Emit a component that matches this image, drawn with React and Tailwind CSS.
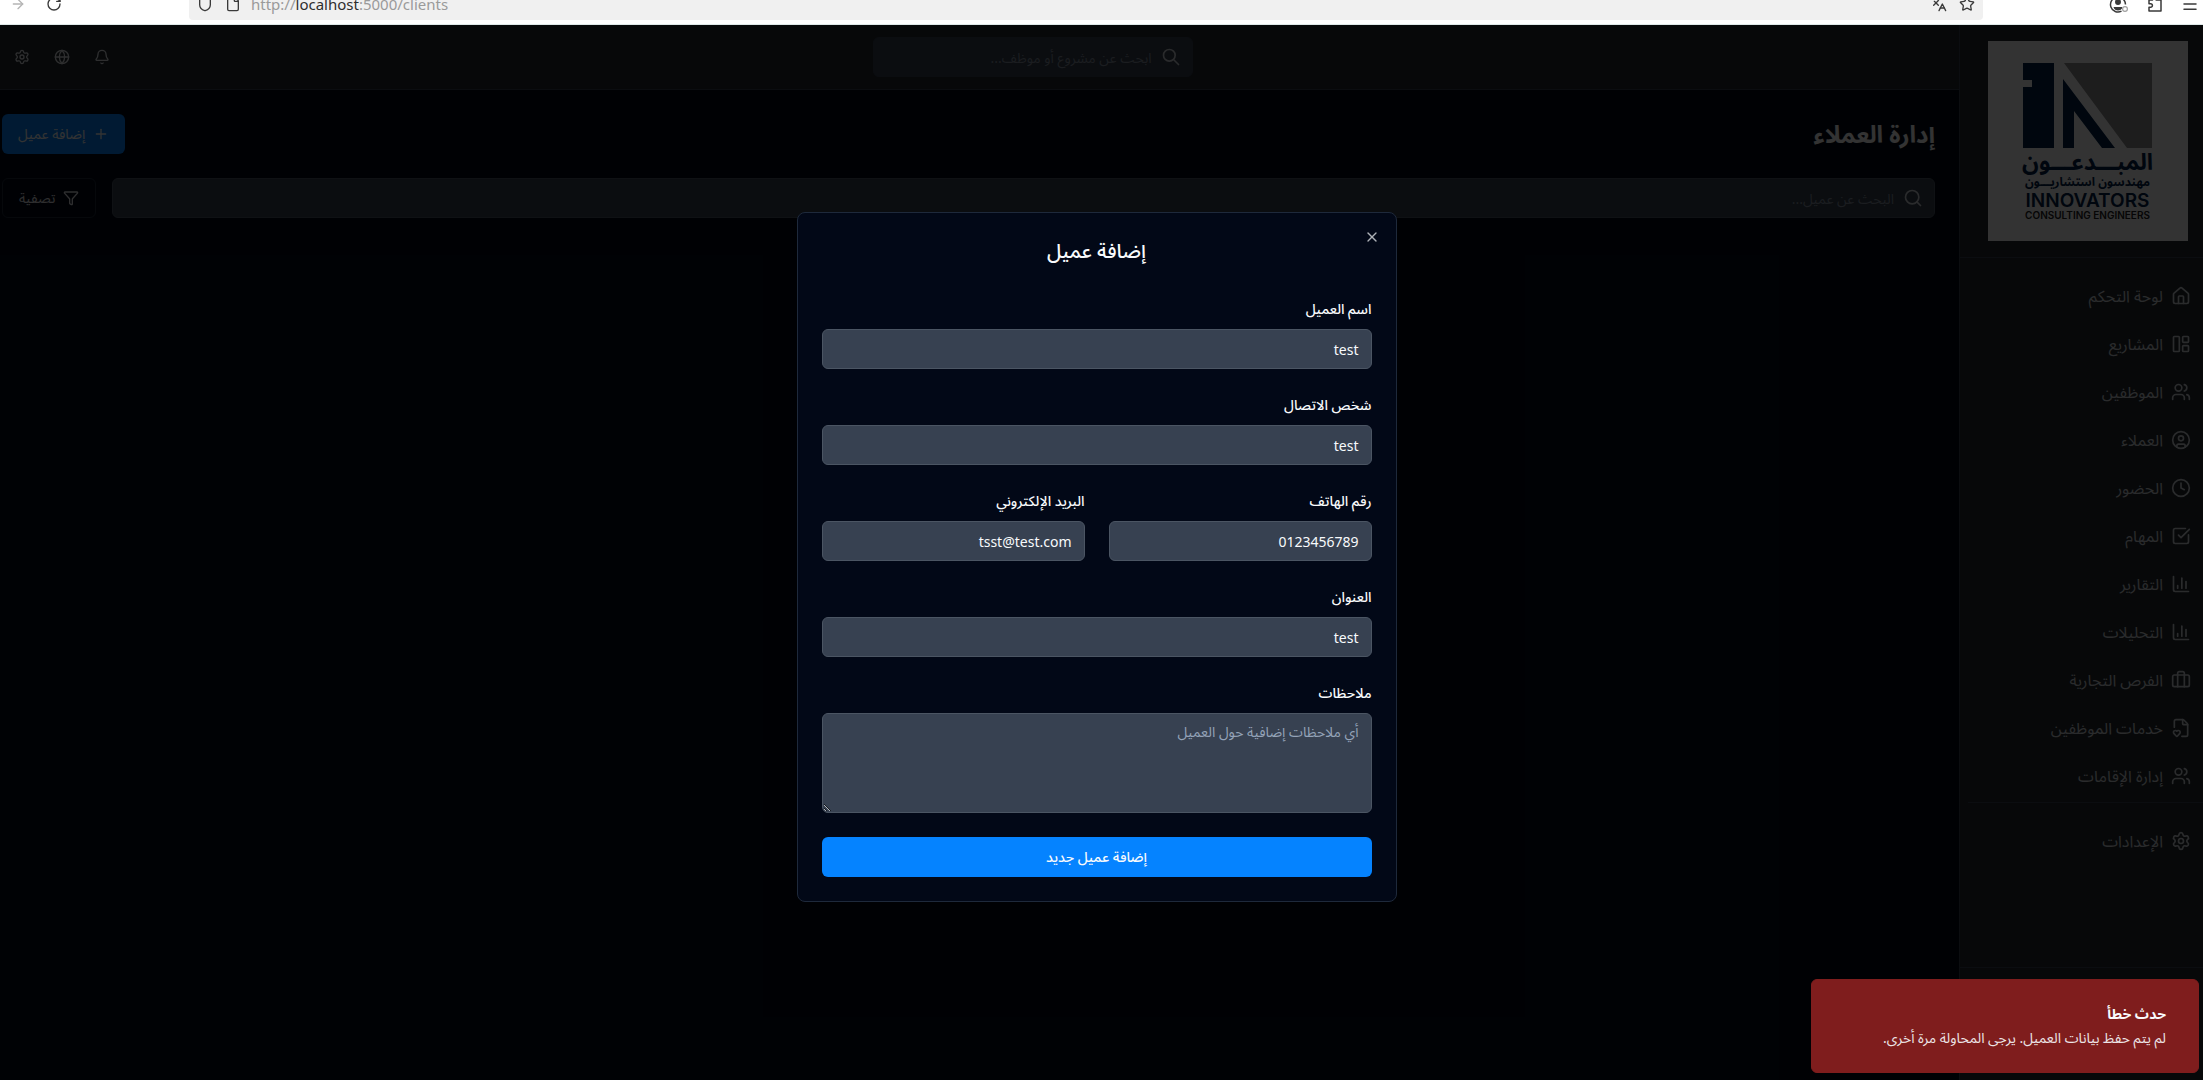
import React from "react";
import {
  ArrowRight,
  Bell,
  Briefcase,
  ChartColumn,
  CircleUser,
  Clock,
  File,
  FileHeart,
  Funnel,
  Globe,
  House,
  LayoutPanelLeft,
  Languages,
  Menu,
  Plus,
  RotateCw,
  Search,
  Settings,
  Shield,
  SquareCheckBig,
  Star,
  Users,
  X,
} from "lucide-react";

const NAV_ITEMS = [
  { label: "لوحة التحكم", icon: House },
  { label: "المشاريع", icon: LayoutPanelLeft },
  { label: "الموظفين", icon: Users },
  { label: "العملاء", icon: CircleUser },
  { label: "الحضور", icon: Clock },
  { label: "المهام", icon: SquareCheckBig },
  { label: "التقارير", icon: ChartColumn },
  { label: "التحليلات", icon: ChartColumn },
  { label: "الفرص التجارية", icon: Briefcase },
  { label: "خدمات الموظفين", icon: FileHeart },
  { label: "إدارة الإقامات", icon: Users },
];

function AccountIcon() {
  return (
    <svg viewBox="0 0 20 18" className="h-[18px] w-5" fill="none" stroke="currentColor" strokeWidth="1.5">
      <path d="M12.5 16.2A7.5 7.5 0 1 1 16.5 9.5" />
      <circle cx="9" cy="7" r="2.2" fill="currentColor" />
      <path d="M4.5 12H13.5C12.8 14.6 11 15.4 9 15.4S5.2 14.6 4.5 12Z" fill="currentColor" stroke="none" />
      <circle cx="16" cy="14" r="2.4" stroke="#a0a0a0" strokeWidth="1.2" />
    </svg>
  );
}

function ExtensionsIcon() {
  return (
    <svg viewBox="0 0 16 16" className="size-4" fill="none" stroke="currentColor" strokeWidth="1.5" strokeLinejoin="round">
      <path d="M2 4H5.5V2.8A1.8 1.8 0 0 1 9.1 2.8V4H14V15H2V11.3H3.6A1.8 1.8 0 0 0 3.6 7.7H2Z" />
    </svg>
  );
}

function BrowserBar() {
  return (
    <div
      dir="ltr"
      className="flex h-[25px] shrink-0 items-end overflow-hidden border-b border-[#dfe9e8] bg-white text-[#3a3a3a]"
    >
      <div className="flex h-10 w-full items-center">
        <div className="flex w-[189px] shrink-0 items-center gap-5 pl-2.5">
          <ArrowRight size={16} className="text-[#b5b5b5]" />
          <RotateCw size={16} />
        </div>
        <div className="flex h-8 min-w-0 flex-1 items-center gap-3 rounded bg-[#f0f0f0] px-2">
          <Shield size={16} />
          <File size={16} />
          <span className="-ml-0.5 flex-1 text-[15px] text-[#9a9a9a]">
            http://<span className="text-[#2e2e2e]">localhost</span>:5000/clients
          </span>
          <Languages size={16} />
          <Star size={16} />
        </div>
        <div className="flex w-[220px] shrink-0 items-center justify-end gap-[18px] pr-1">
          <AccountIcon />
          <ExtensionsIcon />
          <Menu size={18} />
        </div>
      </div>
    </div>
  );
}

function Logo() {
  return (
    <svg viewBox="0 0 200 200" className="size-[200px]" role="img" aria-label="Innovators Consulting Engineers">
      <rect width="200" height="200" fill="#ffffff" />
      <path d="M35 22H66V107H35V46H44V39H35Z" fill="#002148" />
      <path d="M75 38L127 107H114L86 70V107H75Z" fill="#002148" />
      <path d="M76 22H164V107H139Z" fill="#8f8f8f" />
      <g fill="#002148" fontFamily="'Noto Sans Arabic','Noto Sans',sans-serif" fontWeight="700" textAnchor="middle">
        <text x="99.5" y="129" fontSize="23">المبـــدعـــون</text>
        <text x="99.5" y="145" fontSize="12">مهندسون استشاريـــون</text>
      </g>
      <g fill="#002148" fontFamily="Inter,sans-serif" fontWeight="600" textAnchor="middle">
        <text x="99.5" y="166" fontSize="19" direction="ltr">INNOVATORS</text>
        <text x="99.5" y="178" fontSize="10" direction="ltr" fill="#222222">CONSULTING ENGINEERS</text>
      </g>
    </svg>
  );
}

function NavItem({ label, icon: Icon }) {
  return (
    <a href="#" className="flex h-11 items-center gap-2 rounded-md px-4 text-base text-[#d1d5db]">
      <Icon size={20} className="shrink-0" />
      <span>{label}</span>
    </a>
  );
}

function Sidebar() {
  return (
    <aside className="flex w-64 shrink-0 flex-col border-e border-[#374151] bg-[#232b31]">
      <div className="flex justify-center border-b border-[#374151] py-4">
        <Logo />
      </div>
      <nav className="flex flex-1 flex-col px-2 pt-4">
        <div className="flex flex-col gap-1">
          {NAV_ITEMS.map((item) => (
            <NavItem key={item.label} {...item} />
          ))}
        </div>
        <div className="mt-1 border-t border-[#374151] pt-4">
          <NavItem label="الإعدادات" icon={Settings} />
        </div>
      </nav>
      <div className="h-[122px] border-t border-[#374151]" />
    </aside>
  );
}

function Header() {
  return (
    <header className="flex h-[65px] shrink-0 items-center justify-between border-b border-[#374151] bg-[#232b31] px-6">
      <div />
      <div className="relative w-80">
        <svg
          viewBox="0 0 24 24"
          fill="none"
          stroke="currentColor"
          strokeWidth="2"
          strokeLinecap="round"
          strokeLinejoin="round"
          className="absolute start-3 top-2.5 size-5 text-[#d1d5db]"
        >
          <path d="M21 21l-6-6m2-5a7 7 0 11-14 0 7 7 0 0114 0z" />
        </svg>
        <input
          type="search"
          aria-label="بحث"
          placeholder="ابحث عن مشروع أو موظف..."
          className="h-10 w-full rounded-md border border-[#374151] bg-[#374151] ps-10 pe-3 text-sm text-white placeholder:text-[#858f9e]"
        />
      </div>
      <div className="flex ps-2 text-[#e5e7eb]">
        <button type="button" aria-label="الإشعارات" className="flex size-10 items-center justify-center">
          <Bell size={16} />
        </button>
        <button type="button" aria-label="اللغة" className="flex size-10 items-center justify-center">
          <Globe size={16} />
        </button>
        <button type="button" aria-label="الإعدادات" className="flex size-10 items-center justify-center">
          <Settings size={16} />
        </button>
      </div>
    </header>
  );
}

function Clients() {
  return (
    <main className="flex flex-1 flex-col gap-6 p-6">
      <div className="flex items-center justify-between">
        <h1 className="text-2xl font-bold text-white">إدارة العملاء</h1>
        <button
          type="button"
          className="flex h-10 items-center gap-2 rounded-md bg-[#0583ff] px-4 text-sm text-white"
        >
          <Plus size={16} />
          إضافة عميل
        </button>
      </div>
      <div className="flex gap-4">
        <div className="relative flex-1">
          <Search size={20} className="absolute start-3 top-2.5 text-[#d1d5db]" />
          <input
            type="search"
            aria-label="البحث عن عميل"
            placeholder="البحث عن عميل..."
            className="h-10 w-full rounded-md border border-[#4b5563] bg-[#374151] ps-10 pe-3 text-sm text-white placeholder:text-[#858f9e]"
          />
        </div>
        <button
          type="button"
          className="flex h-10 items-center gap-2 rounded-md border border-[#1e293b] px-4 text-sm text-[#e5e7eb]"
        >
          <Funnel size={16} />
          تصفية
        </button>
      </div>
    </main>
  );
}

function Field({ id, label, type = "text", value }) {
  return (
    <div className="flex flex-col gap-2">
      <label htmlFor={id} className="text-sm/6 font-medium">
        {label}
      </label>
      <input
        id={id}
        type={type}
        dir="rtl"
        defaultValue={value}
        className="h-10 w-full rounded-md border border-[#4b5563] bg-[#374151] px-3 text-right text-sm text-[#f8fafc]"
      />
    </div>
  );
}

function ClientDialog() {
  return (
    <div
      role="dialog"
      aria-labelledby="dialog-title"
      className="relative w-[600px] rounded-lg border border-[#1e293b] bg-[#020817] p-6 text-[#f8fafc]"
    >
      <button type="button" aria-label="إغلاق" className="absolute top-4 right-4 opacity-70">
        <X size={16} />
      </button>
      <h2 id="dialog-title" className="text-center text-xl font-medium">
        إضافة عميل
      </h2>
      <form className="mt-8 flex flex-col gap-6">
        <Field id="name" label="اسم العميل" value="test" />
        <Field id="contact" label="شخص الاتصال" value="test" />
        <div className="grid grid-cols-2 gap-6">
          <Field id="phone" label="رقم الهاتف" type="tel" value="0123456789" />
          <Field id="email" label="البريد الإلكتروني" type="email" value="tsst@test.com" />
        </div>
        <Field id="address" label="العنوان" value="test" />
        <div className="flex flex-col gap-2">
          <label htmlFor="notes" className="text-sm/6 font-medium">
            ملاحظات
          </label>
          <textarea
            id="notes"
            placeholder="أي ملاحظات إضافية حول العميل"
            className="block h-[100px] w-full rounded-md border border-[#4b5563] bg-[#374151] px-3 py-2 text-sm placeholder:text-[#94a3b8]"
          />
        </div>
        <button type="button" className="h-10 rounded-md bg-[#0583ff] text-sm font-medium">
          إضافة عميل جديد
        </button>
      </form>
    </div>
  );
}

function Toast() {
  return (
    <div
      role="alert"
      className="absolute right-4 bottom-4 flex w-[388px] flex-col gap-1 rounded-md border border-[#7f1d1d] bg-[#7f1d1d] py-6 ps-8 pe-6 text-sm text-[#f8fafc]"
    >
      <div className="font-bold">حدث خطأ</div>
      <div className="opacity-90">لم يتم حفظ بيانات العميل. يرجى المحاولة مرة أخرى.</div>
    </div>
  );
}

export default function App() {
  return (
    <div className="flex h-screen flex-col overflow-hidden bg-[#020817] font-['Noto_Sans','Noto_Sans_Arabic',sans-serif]">
      <BrowserBar />
      <div dir="rtl" className="relative -mr-3 -mb-[9px] -ml-[22px] flex flex-1">
        <Sidebar />
        <div className="flex min-w-0 flex-1 flex-col">
          <Header />
          <Clients />
        </div>
        <div className="absolute inset-0 flex items-center justify-center bg-black/80">
          <ClientDialog />
        </div>
        <Toast />
      </div>
    </div>
  );
}
